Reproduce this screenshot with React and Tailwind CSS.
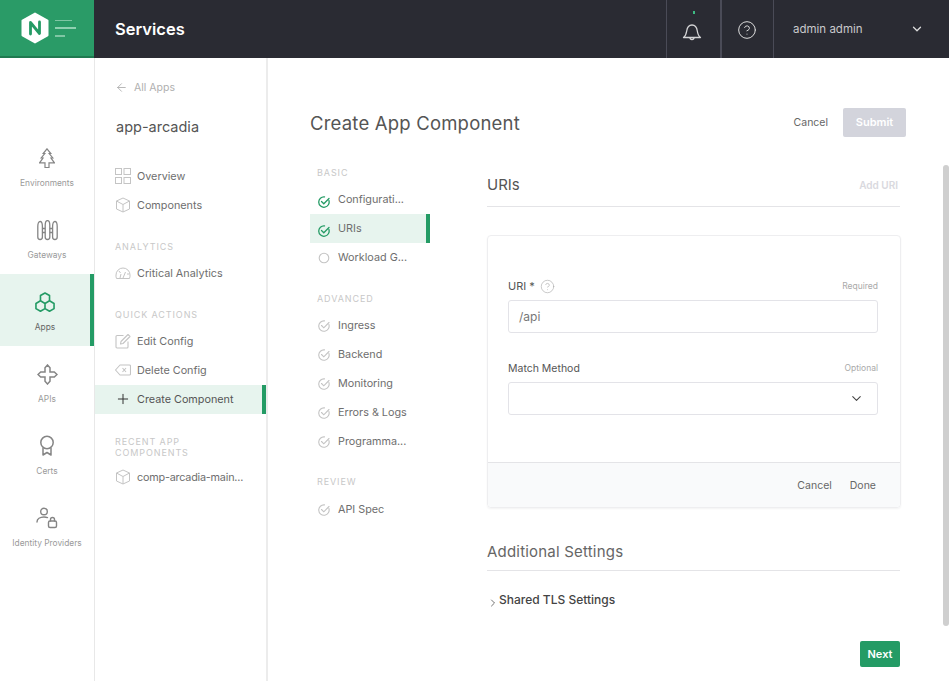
import React from 'react';
import { ChevronDown, ArrowLeft, Plus, CircleHelp, ChevronRight } from 'lucide-react';

const font = "font-['Inter','Noto_Sans',sans-serif]";

const IconTree = () => (
  <svg width="16" height="20" viewBox="0 0 16 20" fill="none" stroke="#858585" strokeWidth="1.200" strokeLinejoin="miter">
    <path d="M8 .8 11.800 5.500H10.200L13.800 10H12L15.400 14.800H10V19.500H6V14.800H.6L4 10H2.200L5.800 5.500H4.200z" />
  </svg>
);

const IconFence = () => (
  <svg width="21" height="21" viewBox="0 0 21 21" fill="none" stroke="#858585" strokeWidth="1.300">
    <path d="M.8 17V6.500C.8 3.500 1.800 1.500 3.100 1.500S5.400 3.500 5.400 6.500V17c0 1.500-.8 2.500-2.300 2.500S.8 18.500.8 17z" />
    <path d="M8.200 17V5.500C8.200 2.500 9.200.6 10.500.6s2.300 1.900 2.300 4.900V17c0 1.500-.8 2.500-2.300 2.500S8.200 18.500 8.200 17z" />
    <path d="M15.600 17V6.500c0-3 1-5 2.300-5s2.300 2 2.300 5V17c0 1.500-.8 2.500-2.300 2.500s-2.300-1-2.300-2.500z" />
    <path d="M5.400 8.500h2.800M12.800 8.500h2.800M5.400 12.500h2.800M12.800 12.500h2.800" />
  </svg>
);

const IconHex = () => (
  <svg width="20" height="20" viewBox="0 0 20 21" fill="none" stroke="#249b65" strokeWidth="1.700" strokeLinejoin="round">
    <path d="M10 1l4.750 2.750v5.500L10 12 5.250 9.250v-5.500zM5.250 9.250L10 12v5.500l-4.750 2.750L.5 17.500V12zM14.750 9.250L19.500 12v5.500l-4.750 2.750L10 17.500V12z" />
  </svg>
);

const IconApi = () => (
  <svg width="21" height="21" viewBox="0 0 21 21" fill="none" stroke="#858585" strokeWidth="1.500" strokeLinejoin="miter">
    <path d="M10.500 1 13 3.700V8h4.300L20 10.500 17.300 13H13v4.300L10.500 20 8 17.300V13H3.700L1 10.500 3.700 8H8V3.700z" />
  </svg>
);

const IconCert = () => (
  <svg width="16" height="22" viewBox="0 0 16 22" fill="none" stroke="#858585" strokeWidth="1.500" strokeLinejoin="round">
    <circle cx="8" cy="7.500" r="6.200" />
    <path d="M4 13v7l4-2.500 4 2.500v-7" />
  </svg>
);

const IconIdentity = () => (
  <svg width="22" height="22" viewBox="0 0 22 22" fill="none" stroke="#858585" strokeWidth="1.400" strokeLinecap="round">
    <circle cx="8" cy="4.500" r="3.300" />
    <path d="M1 15c0-3 3-5 7-5 1.500 0 2.500.2 3.500.6" />
    <rect x="12.500" y="14" width="8" height="6.500" rx="1.500" />
    <path d="M14.500 14v-1.500a2 2 0 014 0V14" />
  </svg>
);

const IconGrid = () => (
  <svg width="16" height="16" viewBox="0 0 16 16" fill="none" stroke="#c4c4c4" strokeWidth="1">
    <rect x=".5" y=".5" width="6" height="6" />
    <rect x="9" y=".5" width="6.500" height="6" />
    <rect x=".5" y="9.500" width="6" height="6" />
    <rect x="9" y="9.500" width="6.500" height="6" />
  </svg>
);

const IconCube = () => (
  <svg width="16" height="16" viewBox="0 0 16 16" fill="none" stroke="#c4c4c4" strokeWidth="1" strokeLinejoin="round">
    <path d="M8 1l6.500 3v8L8 15l-6.500-3V4zM1.500 4L8 7.500 14.500 4M8 7.500V15" />
  </svg>
);

const IconGauge = () => (
  <svg width="16" height="16" viewBox="0 0 16 16" fill="none" stroke="#c4c4c4" strokeWidth="1">
    <path d="M1.500 13.500A7 7 0 011 10a7 7 0 0114 0 7 7 0 01-.5 3.500zM5 13l1-4M8 13l2.500-6M4 6l1.500 2M12 9h2" />
  </svg>
);

const IconEdit = () => (
  <svg width="16" height="16" viewBox="0 0 16 16" fill="none" stroke="#c4c4c4" strokeWidth="1.100" strokeLinejoin="round">
    <path d="M13 8.500V14a1 1 0 01-1 1H2a1 1 0 01-1-1V3.500a1 1 0 011-1h6.500M6 8.500l-.5 2.500 2.500-.5L15 3.500 13 1.500z" />
  </svg>
);

const IconBackspace = () => (
  <svg width="16" height="12" viewBox="0 0 16 12" fill="none" stroke="#c4c4c4" strokeWidth="1.100" strokeLinejoin="round">
    <path d="M5 1h9.500a1 1 0 011 1v8a1 1 0 01-1 1H5L.5 6zM7.500 4l3.500 4M11 4L7.500 8" />
  </svg>
);

const IconCheck = ({ active }) => (
  <svg width="12" height="12" viewBox="0 0 12 12" fill="none" stroke={active ? '#249b65' : '#c4c4c4'} strokeWidth={active ? 1.300 : 1.100} strokeLinecap="round">
    <path d="M10.900 4.500A5.200 5.200 0 116.500.9" />
    <path d="M3.500 5.500 5.800 7.800 11 2.500" />
  </svg>
);

const IconCircle = () => (
  <svg width="12" height="12" viewBox="0 0 12 12" fill="none" stroke="#c4c4c4" strokeWidth="1.100">
    <circle cx="6" cy="6" r="4.800" />
  </svg>
);

const IconBell = () => (
  <svg width="20" height="20" viewBox="0 0 20 20" fill="none" stroke="#d4d4d6" strokeWidth="1.300" strokeLinejoin="round">
    <path d="M1.500 16.500c2-1.500 2.700-3 3.200-6.500.5-3.500 2.300-6 5.300-6s4.800 2.500 5.300 6c.5 3.500 1 5 3.200 6.500z" />
    <path d="M8 16.500c0 1.300.8 2 2 2s2-.7 2-2" />
  </svg>
);

const IconLogo = () => (
  <svg width="28" height="32" viewBox="0 0 28 32">
    <path d="M14 1.500 26.500 8.700v14.600L14 30.500 1.500 23.300V8.700z" fill="#fff" stroke="#fff" strokeWidth="2" strokeLinejoin="round" />
    <path d="M9.500 22V10.500l9 11V10" fill="none" stroke="#249b65" strokeWidth="2.800" strokeLinecap="round" strokeLinejoin="round" />
  </svg>
);

const railItems = [
  { label: 'Environments', icon: <IconTree /> },
  { label: 'Gateways', icon: <IconFence /> },
  { label: 'Apps', icon: <IconHex />, active: true },
  { label: 'APIs', icon: <IconApi /> },
  { label: 'Certs', icon: <IconCert /> },
  { label: 'Identity Providers', icon: <IconIdentity /> },
];

const NavRow = ({ icon, label, active, className = '' }) => (
  <div className={`flex items-center h-[29px] pl-[20px] ${active ? 'bg-[#e7f4ee] border-r-4 border-[#249b65]' : ''}`}>
    <span className="w-[16px] flex justify-center">{icon}</span>
    <span className={`ml-[6px] pt-[2px] text-[10.800px] whitespace-nowrap ${active ? 'text-[#555]' : 'text-[#6e6e6e]'} ${className}`}>{label}</span>
  </div>
);

const SectionLabel = ({ children, className = '' }) => (
  <div className={`text-[9px] leading-[11px] tracking-[0.9px] uppercase text-[#c8c8c8] ${className}`}>{children}</div>
);

const StepRow = ({ label, icon, active, low }) => (
  <div className={`flex items-center h-[29px] pl-[8px] ${active ? 'bg-[#e7f4ee] border-r-4 border-[#249b65]' : ''}`}>
    <span className={low ? 'mt-[5px]' : ''}>{icon}</span>
    <span className="ml-[8px] pt-[2px] text-[10.800px] text-[#6e6e6e] whitespace-nowrap">{label}</span>
  </div>
);

export default function App() {
  return (
    <div className={`relative h-screen w-full overflow-hidden bg-white flex flex-col ${font}`}>
      <header className="h-[58px] shrink-0 bg-[#2a2b33] flex items-stretch">
        <div className="w-[94px] bg-[#2a9b67] border-b-2 border-[#1f7a50] flex items-center pl-[21px] gap-[6px]">
          <IconLogo />
          <div className="flex flex-col gap-[6px]">
            <span className="block h-[1px] w-[17px] bg-[#7fc6a4]" />
            <span className="block h-[2px] w-[21px] bg-[#8fd0b1]" />
            <span className="block h-[2px] w-[10px] bg-[#7fc6a4]" />
          </div>
        </div>
        <div className="ml-[21px] flex items-center text-white text-[16.500px] font-semibold">Services</div>
        <div className="ml-auto flex items-stretch">
          <div className="relative w-[54px] border-l border-[#4a4b57] flex items-center justify-center">
            <span className="absolute top-[11px] left-[26px] w-[2px] h-[3px] bg-[#3dbb83]" />
            <span className="mt-[3px] -ml-[3px]"><IconBell /></span>
          </div>
          <div className="w-[53px] border-l-2 border-[#4a4b57] flex items-center justify-center">
            <span className="-ml-[2px] mt-[1px]"><CircleHelp size={20} strokeWidth={1.200} color="#dcdcdc" /></span>
          </div>
          <div className="w-[176px] border-l border-[#4a4b57] flex items-center pl-[19px] pr-[25px] justify-between">
            <span className="pt-[2px] text-[11.500px] text-[#c9c9cc]">admin admin</span>
            <ChevronDown size={14} strokeWidth={2.200} color="#dcdcdc" />
          </div>
        </div>
      </header>

      <div className="flex flex-1 min-h-0">
        <aside className="w-[95px] shrink-0 border-r border-[#e8e8e8] pt-[72px]">
          {railItems.map((item) => (
            <div key={item.label} className={`h-[72px] flex flex-col items-center pt-[16px] ${item.active ? 'bg-[#e7f4ee] border-r-4 border-[#249b65]' : ''}`}>
              <div className="h-[24px] flex items-center justify-center">{item.icon}</div>
              <div className={`mt-[7px] text-[8.400px] whitespace-nowrap ${item.active ? 'text-[#666] ' : 'text-[#9a9a9a]'}`}>{item.label}</div>
            </div>
          ))}
        </aside>

        <nav className="w-[173px] shrink-0 border-r-2 border-[#ececec]">
          <div className="flex items-center gap-[6px] pl-[20px] mt-[22px] text-[10.500px] text-[#b0b0b0]">
            <ArrowLeft size={13} strokeWidth={1.500} color="#a8a8a8" />
            <span>All Apps</span>
          </div>
          <div className="pl-[21px] mt-[21px] text-[14.500px] leading-[20px] text-[#555]">app-arcadia</div>
          <div className="mt-[25px]">
            <NavRow icon={<IconGrid />} label="Overview" />
            <NavRow icon={<IconCube />} label="Components" />
          </div>
          <SectionLabel className="pl-[20px] mt-[21px]">Analytics</SectionLabel>
          <div className="mt-[7px]">
            <NavRow icon={<IconGauge />} label="Critical Analytics" />
          </div>
          <SectionLabel className="pl-[20px] mt-[21px]">Quick Actions</SectionLabel>
          <div className="mt-[7px]">
            <NavRow icon={<IconEdit />} label="Edit Config" />
            <NavRow icon={<IconBackspace />} label="Delete Config" />
            <NavRow icon={<Plus size={16} strokeWidth={1.500} color="#333" />} label="Create Component" active />
          </div>
          <SectionLabel className="pl-[20px] mt-[22px] w-[120px]">Recent App Components</SectionLabel>
          <div className="mt-[5px]">
            <NavRow icon={<IconCube />} label="comp-arcadia-main..." className="tracking-[-0.2px]" />
          </div>
        </nav>

        <main className="flex-1 min-w-0 pl-[42px] pr-[43px]">
          <div className="flex items-center justify-between mt-[50px] h-[29px]">
            <h1 className="pt-[2px] text-[18.500px] font-normal text-[#555] tracking-[0.2px]">Create App Component</h1>
            <div className="flex items-center gap-[15px]">
              <span className="text-[10.500px] text-[#666]">Cancel</span>
              <span className="w-[63px] h-[29px] rounded-[2px] bg-[#d3d4dc] text-white text-[11px] font-semibold flex items-center justify-center">Submit</span>
            </div>
          </div>

          <div className="flex mt-[29px]">
            <div className="w-[120px] shrink-0 pt-[1px]">
              <SectionLabel className="pl-[7px]">Basic</SectionLabel>
              <div className="mt-[7px]">
                <StepRow icon={<IconCheck active />} label="Configurati..." low />
                <StepRow icon={<IconCheck active />} label="URIs" active low />
                <StepRow icon={<IconCircle />} label="Workload G..." />
              </div>
              <SectionLabel className="pl-[7px] mt-[21px]">Advanced</SectionLabel>
              <div className="mt-[7px]">
                <StepRow icon={<IconCheck />} label="Ingress" />
                <StepRow icon={<IconCheck />} label="Backend" />
                <StepRow icon={<IconCheck />} label="Monitoring" />
                <StepRow icon={<IconCheck />} label="Errors &amp; Logs" />
                <StepRow icon={<IconCheck />} label="Programma..." />
              </div>
              <SectionLabel className="pl-[7px] mt-[20px]">Review</SectionLabel>
              <div className="mt-[8px]">
                <StepRow icon={<IconCheck />} label="API Spec" />
              </div>
            </div>

            <div className="ml-[57px] w-[413px] shrink-0 -mt-[2px]">
              <div className="flex items-center justify-between h-[43px] border-b border-[#e4e4e7]">
                <h2 className="text-[15px] font-normal text-[#555]">URIs</h2>
                <span className="text-[10px] font-semibold text-[#d9d9de] pr-[2px]">Add URI</span>
              </div>

              <div className="mt-[28px] w-[414px] border border-[#eeeef0] rounded-[4px] shadow-[0_1px_2px_rgba(0,0,0,0.05)]">
                <div className="h-[226px] pl-[20px] pr-[22px] pt-[42px]">
                  <div className="flex justify-between items-center h-[16px]">
                    <div className="flex items-center gap-[5px]">
                      <span className="text-[11px] text-[#555]">URI *</span>
                      <CircleHelp size={15} strokeWidth={1} color="#aaa" />
                    </div>
                    <span className="text-[8.500px] text-[#aaa]">Required</span>
                  </div>
                  <div className="mt-[6px] h-[33px] border border-[#e3e3e8] rounded-[3px] flex items-center pl-[10px] text-[12px] text-[#777]">/api</div>
                  <div className="flex justify-between items-center h-[16px] mt-[27px]">
                    <span className="pt-[2px] text-[10.500px] text-[#555]">Match Method</span>
                    <span className="text-[8.500px] text-[#aaa]">Optional</span>
                  </div>
                  <div className="mt-[6px] h-[33px] border border-[#e3e3e8] rounded-[3px] flex items-center justify-end pr-[13px]">
                    <ChevronDown size={15} strokeWidth={1.700} color="#444" />
                  </div>
                </div>
                <div className="h-[45px] pt-[2px] bg-[#f9fafb] border-t border-[#e4e4e7] rounded-b-[4px] flex items-center justify-end pr-[24px] text-[10.500px] text-[#666]">
                  <span className="mr-[18px]">Cancel</span>
                  <span>Done</span>
                </div>
              </div>

              <div className="mt-[33px] h-[30px] border-b border-[#e4e4e7] text-[15px] text-[#666] tracking-[0.2px]">Additional Settings</div>
              <div className="flex items-center mt-[20px] h-[18px]">
                <ChevronRight size={12} strokeWidth={1.500} color="#444" className="mt-[5px]" />
                <span className="text-[12px] font-medium text-[#444]">Shared TLS Settings</span>
              </div>
              <div className="flex justify-end mt-[32px]">
                <span className="w-[40px] h-[26px] rounded-[2px] bg-[#249b65] text-white text-[11px] font-semibold flex items-center justify-center">Next</span>
              </div>
            </div>
          </div>
        </main>
      </div>

      <div className="absolute top-[165px] right-0 w-[6px] h-[461px] rounded-[3px] bg-[#cfcfcf]" />
    </div>
  );
}
